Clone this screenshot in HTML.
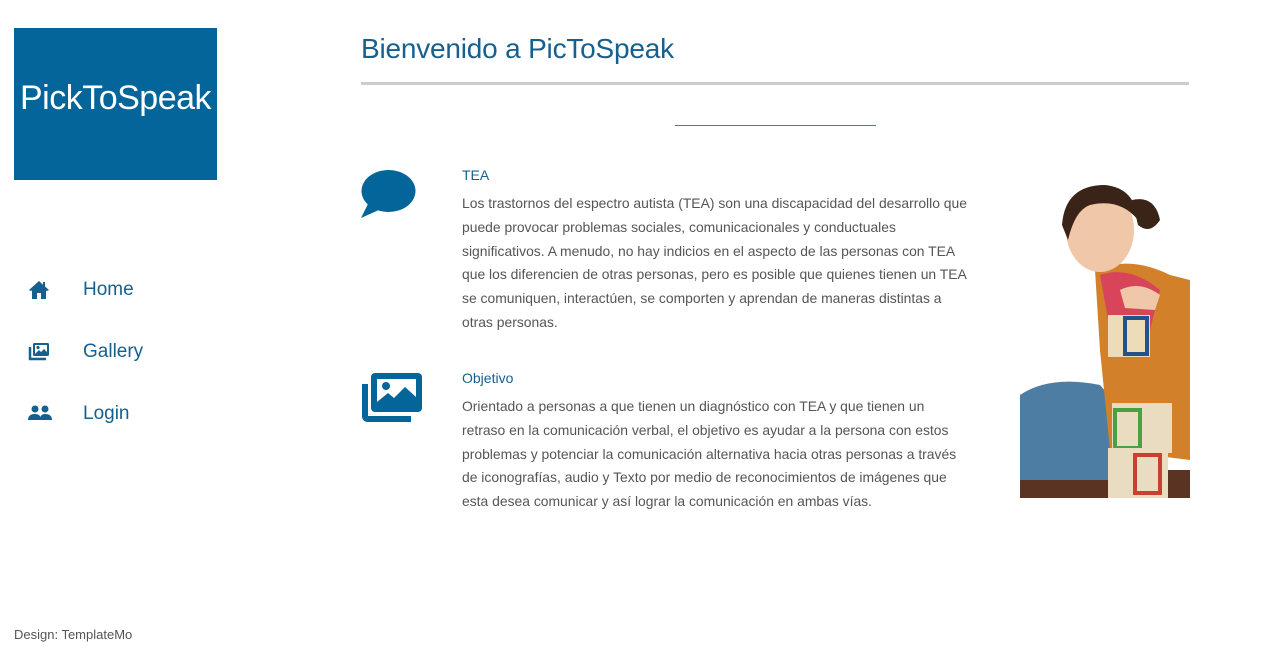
<!DOCTYPE html>
<html><head><meta charset="utf-8"><style>
*{margin:0;padding:0;box-sizing:border-box}
body{width:1280px;height:650px;background:#fff;font-family:"Liberation Sans",sans-serif;position:relative;overflow:hidden;color:#555}
.logo{position:absolute;left:14px;top:28px;width:203px;height:152px;background:#036599;color:#fff;font-size:34px;display:flex;align-items:center;justify-content:center;letter-spacing:-0.5px;padding-bottom:12px}
.nav{position:absolute;left:28px;font-size:19px;color:#16608f}
.nav svg{position:absolute;left:0;top:2px}
.nav span{position:absolute;left:55px;top:1px;white-space:nowrap}
h1{position:absolute;left:361px;top:33px;font-weight:normal;font-size:28px;color:#16608f;letter-spacing:-0.2px}
.hr{position:absolute;left:361px;top:82px;width:828px;height:3px;background:#ccc}
.bl{position:absolute;left:675px;top:125px;width:201px;height:1px;background:#4a7ca3}
.t{position:absolute;left:462px;font-size:14px;color:#16608f}
.p{position:absolute;left:462px;white-space:nowrap;font-size:13.9px;line-height:23.8px;color:#555}
.foot{position:absolute;left:14px;top:627px;font-size:13px;color:#555}
</style></head><body>
<div class="logo">PickToSpeak</div>

<div class="nav" style="top:278px"><svg width="22" height="20" viewBox="0 0 22 20"><path d="M11 1 L1 10 L3 11 L4 10.5 V19 H9 V13 H13 V19 H18 V10.5 L19 11 L21 10 L17 6.5 V2 H15 V4.7 Z" fill="#16608f"/></svg><span>Home</span></div>
<div class="nav" style="top:340px"><svg width="22" height="20" viewBox="0 0 22 20"><rect x="5" y="1" width="16" height="13" rx="1.5" fill="#16608f"/><rect x="7" y="3" width="12" height="9" fill="#fff"/><circle cx="10" cy="5.5" r="1.6" fill="#16608f"/><path d="M7 12 L11 8 L13 10 L16 7 L19 10 V12 Z" fill="#16608f"/><path d="M2 5 V17 H18" stroke="#16608f" stroke-width="2.5" fill="none"/></svg><span>Gallery</span></div>
<div class="nav" style="top:402px"><svg width="24" height="20" viewBox="0 0 24 20"><circle cx="7" cy="5" r="3.5" fill="#16608f"/><circle cx="17" cy="5" r="3.5" fill="#16608f"/><path d="M0 16 Q0 10 7 10 Q13 10 13 16 Z M12 16 Q12 10 17 10 Q24 10 24 16 Z" fill="#16608f"/></svg><span>Login</span></div>

<h1>Bienvenido a PicToSpeak</h1>
<div class="hr"></div>
<div class="bl"></div>

<svg style="position:absolute;left:361px;top:170px" width="56" height="50" viewBox="0 0 56 50"><ellipse cx="27.5" cy="21" rx="27" ry="21" fill="#036599"/><path d="M8 32 L0 48 L20 39 Z" fill="#036599"/></svg>
<div class="t" style="top:167px">TEA</div>
<div class="p" style="top:192px">Los trastornos del espectro autista (TEA) son una discapacidad del desarrollo que<br>puede provocar problemas sociales, comunicacionales y conductuales<br>significativos. A menudo, no hay indicios en el aspecto de las personas con TEA<br>que los diferencien de otras personas, pero es posible que quienes tienen un TEA<br>se comuniquen, interactúen, se comporten y aprendan de maneras distintas a<br>otras personas.</div>

<svg style="position:absolute;left:361px;top:372px" width="62" height="50" viewBox="0 0 62 50"><rect x="10" y="1" width="51" height="39" rx="4" fill="#036599"/><rect x="16" y="7" width="39" height="26" fill="#fff"/><circle cx="25" cy="14" r="4" fill="#036599"/><path d="M16 30 L27 21 L33 26 L44 15 L55 25 V33 H16Z" fill="#036599"/><path d="M4 12 V44 Q4 47 7 47 H50" stroke="#036599" stroke-width="6" fill="none"/></svg>
<div class="t" style="top:370px">Objetivo</div>
<div class="p" style="top:395px">Orientado a personas a que tienen un diagnóstico con TEA y que tienen un<br>retraso en la comunicación verbal, el objetivo es ayudar a la persona con estos<br>problemas y potenciar la comunicación alternativa hacia otras personas a través<br>de iconografías, audio y Texto por medio de reconocimientos de imágenes que<br>esta desea comunicar y así lograr la comunicación en ambas vías.</div>

<svg style="position:absolute;left:1020px;top:180px" width="170" height="318" viewBox="0 0 170 318">
<rect x="0" y="290" width="170" height="28" fill="#5a3322"/>
<path d="M0 215 Q30 195 80 205 L110 240 L100 300 L0 300 Z" fill="#4d7da3"/>
<path d="M75 90 Q110 75 150 95 L170 100 V280 L90 270 L80 170 Z" fill="#d2812a"/>
<path d="M80 95 Q110 85 140 110 L130 150 L90 150 Z" fill="#d8455a"/>
<ellipse cx="80" cy="50" rx="34" ry="42" fill="#f0c7a8"/>
<path d="M42 45 Q45 5 85 5 Q115 8 118 40 Q100 18 70 25 Q55 30 48 60 Z" fill="#3a2418"/>
<path d="M112 20 Q135 15 140 40 Q130 55 118 45 Z" fill="#3a2418"/>
<rect x="88" y="135" width="42" height="42" fill="#eddcb8"/><rect x="105" y="138" width="22" height="36" fill="none" stroke="#25518f" stroke-width="4"/>
<rect x="92" y="223" width="60" height="50" fill="#e9dcc0"/><rect x="95" y="230" width="25" height="38" fill="none" stroke="#4aa042" stroke-width="4"/>
<rect x="88" y="268" width="60" height="50" fill="#e9dcc0"/><rect x="115" y="275" width="25" height="38" fill="none" stroke="#c8402f" stroke-width="4"/>
<path d="M100 110 Q120 100 140 115 L135 130 L105 128 Z" fill="#f0c7a8"/>
</svg>

<div class="foot">Design: TemplateMo</div>
</body></html>
